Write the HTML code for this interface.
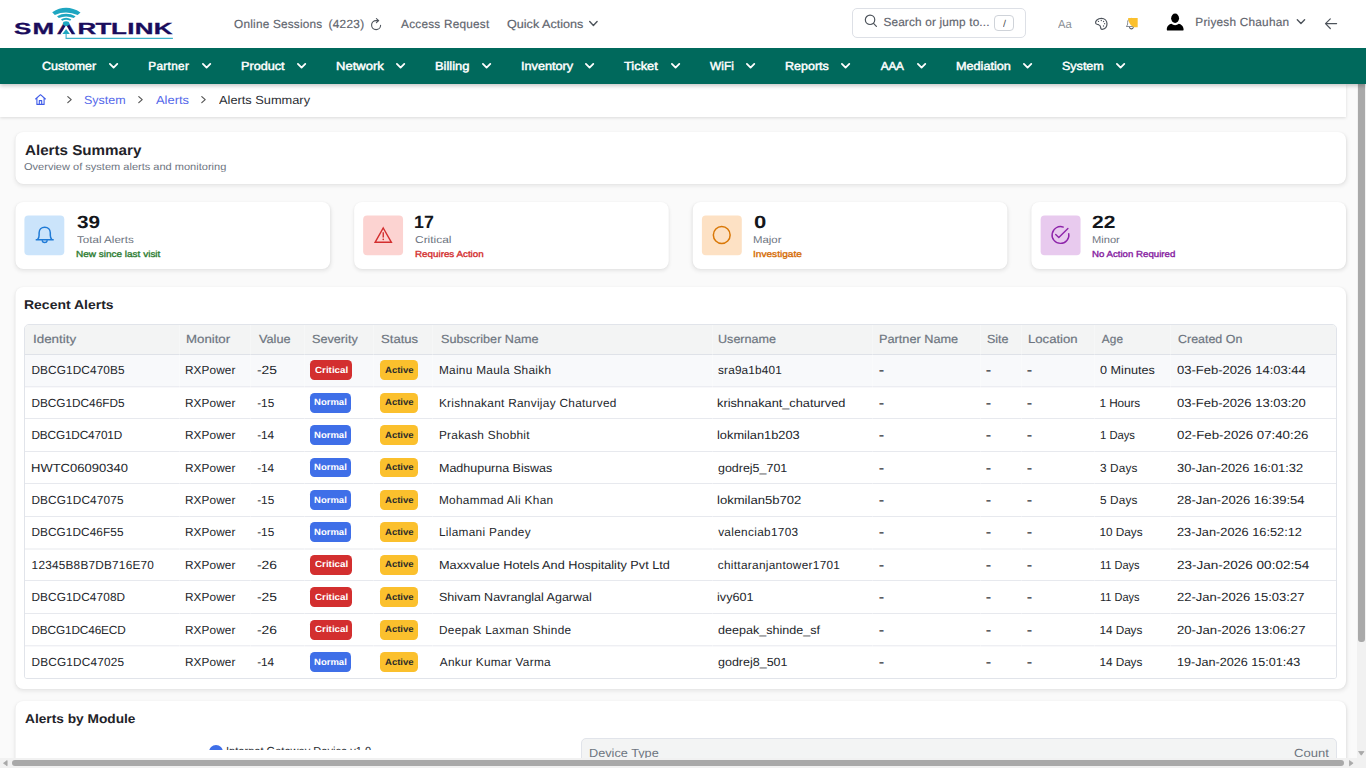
<!DOCTYPE html>
<html lang="en"><head><meta charset="utf-8"><title>Alerts Summary - Smartlink</title>
<style>
*{box-sizing:border-box;margin:0;padding:0}
html,body{width:1366px;height:768px;overflow:hidden;background:#fafafa}
body{font-family:"Liberation Sans",sans-serif;font-size:13px;color:#1f2329;position:relative;text-rendering:geometricPrecision}
.hx{-webkit-text-stroke:0.18px #5f656e}
.t{position:absolute;white-space:nowrap;line-height:1;display:block;transform-origin:0 50%}
a.t{text-decoration:none}
svg{position:absolute;overflow:visible}
#top{position:absolute;left:0;top:0;width:1366px;height:48px;background:#fff;z-index:6}
#nav{position:absolute;left:0;top:48px;width:1366px;height:36px;background:#00695c;z-index:5;box-shadow:0 2px 4px rgba(0,0,0,.22)}
#main{position:absolute;left:0;top:84px;width:1357px;height:674px;overflow:hidden;background:#fafafa}
#crumb{position:absolute;left:0;top:0;width:1346px;height:33px;background:#fff;box-shadow:0 1px 3px rgba(0,0,0,.13)}
.card{position:absolute}
.card::before{content:"";position:absolute;left:0;top:0;right:0;bottom:0;background:#fff;border-radius:8px;box-shadow:0 2px 4px rgba(0,0,0,.085),0 0 2px rgba(0,0,0,.035);transform-origin:0 0;transform:translateX(var(--dx,0px)) scaleX(var(--sx,1))}
.ib{position:absolute;width:40px;height:40px;border-radius:4px}
.search{position:absolute;left:852px;top:8px;width:174px;height:30px;border:1px solid #dde0e6;border-radius:5px;background:#fff}
.kbd{position:absolute;left:994px;top:15px;width:20px;height:16px;border:1px solid #cfd3d9;border-radius:4px;background:#fff}
.tbl{position:absolute;border:1px solid #e1e4ea;border-radius:5px 5px 3px 3px;overflow:hidden;background:#fff}
.th{position:absolute;left:0;top:0;right:0;background:#f3f4f4;border-bottom:1px solid #dfe2e8}
.tr{position:absolute;left:0;right:0;background:#fff}
.dv{position:absolute;left:0;right:0;height:1px;background:#e7e9ee;display:block}
.cv{position:absolute;top:0;bottom:0;width:1px;background:rgba(255,255,255,.3);display:block}
.tr.h{background:#f8f9fb}
.bd{position:absolute;border-radius:4.5px}
.vs{position:absolute;left:1357px;top:84px;width:9px;height:684px;background:#f1f1f1;z-index:3}
.hs{position:absolute;left:0;top:758px;width:1357px;height:10px;background:#f1f1f1;z-index:3}
.thumb{position:absolute;background:#a9a9a9;border-radius:3px}
</style></head>
<body>
<header id="top">
<svg style="left:0;top:0" width="200" height="48" viewBox="0 0 200 48">
<text transform="scale(1.62,1.0)" x="8.58 20.04 35.08 47.83 58.98 68.48 78.61 83.23 94.95" y="34.05" font-family="Liberation Sans, sans-serif" font-weight="700" font-size="16.0" fill="#1a0c5c" stroke="#1a0c5c" stroke-width="0.3" stroke-linejoin="miter" text-rendering="geometricPrecision">SMARTLINK</text>
<path d="M66.1 25.5 L60.2 34.6 H72 Z" fill="#fff"/>
<path d="M66.1 29.0 L62.4 34.1 H69.8 Z" fill="#1ea6c1"/>
<path d="M66.1 33.5 V38.4 H172.9" fill="none" stroke="#3fb2cb" stroke-width="1.1"/>
<ellipse cx="66.1" cy="23.6" rx="3.2" ry="2.3" fill="#1ea6c1"/>
<path d="M52.2 12.2 Q66.1 3.3 80.5 12.4 L77.7 15.0 Q66.1 10.0 54.8 14.9 Z" fill="#1ea6c1"/>
<path d="M57.0 16.2 Q66.1 11.4 75.6 16.3 L73.8 18.1 Q66.1 14.9 58.8 18.0 Z" fill="#1ea6c1"/>
<path d="M61.0 19.3 Q66.1 16.2 71.3 19.3 L70.2 20.7 Q66.1 18.8 62.1 20.7 Z" fill="#1ea6c1"/>
</svg>
<span class="t hx" style="left:234.10px;top:19.10px;font-size:11.8px;letter-spacing:0.207px;color:#5f656e;">Online Sessions</span>
<span class="t hx" style="left:328.40px;top:19.10px;font-size:11.8px;letter-spacing:0.341px;color:#5f656e;">(4223)</span>
<svg style="left:0;top:0" width="1366" height="48" viewBox="0 0 1366 48"><path d="M380.6 25.2 A4.5 4.5 0 1 1 376.1 20.6 H378.6 M376.4 18.6 L378.7 20.6 L376.4 22.7" fill="none" stroke="#4d535b" stroke-width="1.1" stroke-linecap="round" stroke-linejoin="round"/></svg>
<span class="t hx" style="left:401.05px;top:19.10px;font-size:11.8px;letter-spacing:0.227px;color:#5f656e;">Access Request</span>
<span class="t hx" style="left:507.46px;top:19.10px;font-size:11.8px;transform:scaleX(1.0679);color:#5f656e;">Quick Actions</span>
<svg style="left:0;top:0" width="1366" height="48" viewBox="0 0 1366 48"><path d="M589.7 21.6 L593.4 25.4 L597.1 21.6" fill="none" stroke="#4d535b" stroke-width="1.4" stroke-linecap="round" stroke-linejoin="round"/></svg>
<div class="search">
<svg style="left:0;top:0" width="172" height="28" viewBox="853 9 172 28"><circle cx="870.05" cy="19.8" r="4.7" fill="none" stroke="#4d535b" stroke-width="1.2"/><path d="M873.5 23.4 L876.4 26.4" stroke="#4d535b" stroke-width="1.2" stroke-linecap="round"/></svg>
<span class="t hx" style="left:30.38px;top:8.20px;font-size:11.8px;letter-spacing:0.169px;color:#5f656e;">Search or jump to...</span>
</div>
<div class="kbd"><span class="t" style="left:7.55px;top:3.60px;font-size:10px;transform:scaleX(1.0844);color:#555;">/</span></div>
<span class="t" style="left:1057.65px;top:19.10px;font-size:11.8px;transform:scaleX(0.9478);color:#8a8f96;">Aa</span>
<svg style="left:0;top:0" width="1366" height="48" viewBox="0 0 1366 48"><path d="M1101.4 18.4 C1097.6 18.4 1095.2 20.9 1095.6 23.2 C1095.9 24.4 1097.2 24.3 1098.6 24.7 C1100.2 25.2 1100.6 26.3 1100.7 27.6 C1100.8 28.7 1101.2 29.4 1102.2 29.3 C1104.9 28.9 1107.0 26.6 1107.0 23.7 C1107.0 20.7 1104.6 18.4 1101.4 18.4 Z" fill="none" stroke="#4d535b" stroke-width="1.2" stroke-linejoin="round"/><g fill="#4d535b"><circle cx="1098.5" cy="21.4" r=".65"/><circle cx="1101.3" cy="20.5" r=".65"/><circle cx="1103.6" cy="21.5" r=".65"/><circle cx="1104.6" cy="23.7" r=".65"/><circle cx="1103.5" cy="26.0" r=".65"/></g></svg>
<svg style="left:0;top:0" width="1366" height="48" viewBox="0 0 1366 48"><path d="M1126.2 26.5 C1127.6 25.6 1127.6 24.6 1127.6 22.6 C1127.6 20.2 1129.0 18.4 1131.4 18.4 C1133.8 18.4 1135.2 20.2 1135.2 22.6 C1135.2 24.6 1135.2 25.6 1136.6 26.5 Z" fill="none" stroke="#868c94" stroke-width="1.0" stroke-linejoin="round"/><path d="M1129.6 27.6 A1.9 1.9 0 0 0 1133.2 27.6" fill="none" stroke="#4d535b" stroke-width="1.1" stroke-linecap="round"/><path d="M1128.1 18.0 H1137.7 V27.3 H1134.4 C1130.8 26.2 1128.6 23.0 1128.1 18.0 Z" fill="#fbc02d"/></svg>
<svg style="left:0;top:0" width="1366" height="48" viewBox="0 0 1366 48"><ellipse cx="1175.1" cy="18.2" rx="3.95" ry="4.7" fill="#000"/><path d="M1166.8 29.4 C1166.8 26.4 1169.2 24.2 1171.4 23.8 C1172.4 24.7 1173.7 25.2 1175.1 25.2 C1176.5 25.2 1177.8 24.7 1178.8 23.8 C1181.0 24.2 1183.6 26.4 1183.6 29.4 C1183.6 30.2 1183.1 30.6 1182.4 30.6 H1168.0 C1167.3 30.6 1166.8 30.2 1166.8 29.4 Z" fill="#000"/></svg>
<span class="t hx" style="left:1195.33px;top:17.00px;font-size:11.8px;letter-spacing:0.229px;color:#5f656e;">Priyesh Chauhan</span>
<svg style="left:0;top:0" width="1366" height="48" viewBox="0 0 1366 48"><path d="M1297.3 19.8 L1300.95 23.4 L1304.6 19.8" fill="none" stroke="#4d535b" stroke-width="1.4" stroke-linecap="round" stroke-linejoin="round"/></svg>
<svg style="left:0;top:0" width="1366" height="48" viewBox="0 0 1366 48"><path d="M1336.6 23.6 H1325.6 M1330.3 18.8 L1325.5 23.6 L1330.3 28.5" fill="none" stroke="#4d535b" stroke-width="1.2" stroke-linecap="round" stroke-linejoin="round"/></svg>
</header>
<nav id="nav">
<a class="t" style="left:41.56px;top:13.20px;font-size:11.8px;transform:scaleX(1.0596);color:#fff;-webkit-text-stroke:0.45px #fff;">Customer</a>
<svg style="left:108.6px;top:15.2px" width="9.2" height="6" viewBox="0 0 9.2 6"><path d="M0.9 0.9 L4.6 4.6 L8.3 0.9" fill="none" stroke="#fff" stroke-width="1.8" stroke-linecap="round" stroke-linejoin="round"/></svg>
<a class="t" style="left:148.23px;top:13.20px;font-size:11.8px;letter-spacing:0.339px;color:#fff;-webkit-text-stroke:0.45px #fff;">Partner</a>
<svg style="left:201.8px;top:15.2px" width="9.2" height="6" viewBox="0 0 9.2 6"><path d="M0.9 0.9 L4.6 4.6 L8.3 0.9" fill="none" stroke="#fff" stroke-width="1.8" stroke-linecap="round" stroke-linejoin="round"/></svg>
<a class="t" style="left:240.56px;top:13.20px;font-size:11.8px;transform:scaleX(1.0720);color:#fff;-webkit-text-stroke:0.45px #fff;">Product</a>
<svg style="left:296.7px;top:15.2px" width="9.2" height="6" viewBox="0 0 9.2 6"><path d="M0.9 0.9 L4.6 4.6 L8.3 0.9" fill="none" stroke="#fff" stroke-width="1.8" stroke-linecap="round" stroke-linejoin="round"/></svg>
<a class="t" style="left:335.53px;top:13.20px;font-size:11.8px;transform:scaleX(1.1037);color:#fff;-webkit-text-stroke:0.45px #fff;">Network</a>
<svg style="left:396.2px;top:15.2px" width="9.2" height="6" viewBox="0 0 9.2 6"><path d="M0.9 0.9 L4.6 4.6 L8.3 0.9" fill="none" stroke="#fff" stroke-width="1.8" stroke-linecap="round" stroke-linejoin="round"/></svg>
<a class="t" style="left:435.14px;top:13.20px;font-size:11.8px;transform:scaleX(1.0954);color:#fff;-webkit-text-stroke:0.45px #fff;">Billing</a>
<svg style="left:481.7px;top:15.2px" width="9.2" height="6" viewBox="0 0 9.2 6"><path d="M0.9 0.9 L4.6 4.6 L8.3 0.9" fill="none" stroke="#fff" stroke-width="1.8" stroke-linecap="round" stroke-linejoin="round"/></svg>
<a class="t" style="left:520.56px;top:13.20px;font-size:11.8px;transform:scaleX(1.0742);color:#fff;-webkit-text-stroke:0.45px #fff;">Inventory</a>
<svg style="left:585.0px;top:15.2px" width="9.2" height="6" viewBox="0 0 9.2 6"><path d="M0.9 0.9 L4.6 4.6 L8.3 0.9" fill="none" stroke="#fff" stroke-width="1.8" stroke-linecap="round" stroke-linejoin="round"/></svg>
<a class="t" style="left:624.15px;top:13.20px;font-size:11.8px;transform:scaleX(1.0894);color:#fff;-webkit-text-stroke:0.45px #fff;">Ticket</a>
<svg style="left:670.5px;top:15.2px" width="9.2" height="6" viewBox="0 0 9.2 6"><path d="M0.9 0.9 L4.6 4.6 L8.3 0.9" fill="none" stroke="#fff" stroke-width="1.8" stroke-linecap="round" stroke-linejoin="round"/></svg>
<a class="t" style="left:709.95px;top:13.20px;font-size:11.8px;letter-spacing:0.146px;color:#fff;-webkit-text-stroke:0.45px #fff;">WiFi</a>
<svg style="left:745.9px;top:15.2px" width="9.2" height="6" viewBox="0 0 9.2 6"><path d="M0.9 0.9 L4.6 4.6 L8.3 0.9" fill="none" stroke="#fff" stroke-width="1.8" stroke-linecap="round" stroke-linejoin="round"/></svg>
<a class="t" style="left:785.17px;top:13.20px;font-size:11.8px;transform:scaleX(1.0605);color:#fff;-webkit-text-stroke:0.45px #fff;">Reports</a>
<svg style="left:841.0px;top:15.2px" width="9.2" height="6" viewBox="0 0 9.2 6"><path d="M0.9 0.9 L4.6 4.6 L8.3 0.9" fill="none" stroke="#fff" stroke-width="1.8" stroke-linecap="round" stroke-linejoin="round"/></svg>
<a class="t" style="left:880.75px;top:13.20px;font-size:11.8px;letter-spacing:-0.210px;color:#fff;-webkit-text-stroke:0.45px #fff;">AAA</a>
<svg style="left:916.5px;top:15.2px" width="9.2" height="6" viewBox="0 0 9.2 6"><path d="M0.9 0.9 L4.6 4.6 L8.3 0.9" fill="none" stroke="#fff" stroke-width="1.8" stroke-linecap="round" stroke-linejoin="round"/></svg>
<a class="t" style="left:956.16px;top:13.20px;font-size:11.8px;transform:scaleX(1.0720);color:#fff;-webkit-text-stroke:0.45px #fff;">Mediation</a>
<svg style="left:1022.8px;top:15.2px" width="9.2" height="6" viewBox="0 0 9.2 6"><path d="M0.9 0.9 L4.6 4.6 L8.3 0.9" fill="none" stroke="#fff" stroke-width="1.8" stroke-linecap="round" stroke-linejoin="round"/></svg>
<a class="t" style="left:1062.06px;top:13.20px;font-size:11.8px;transform:scaleX(1.0623);color:#fff;-webkit-text-stroke:0.45px #fff;">System</a>
<svg style="left:1115.6px;top:15.2px" width="9.2" height="6" viewBox="0 0 9.2 6"><path d="M0.9 0.9 L4.6 4.6 L8.3 0.9" fill="none" stroke="#fff" stroke-width="1.8" stroke-linecap="round" stroke-linejoin="round"/></svg>
</nav>
<main id="main">
<div id="crumb">
<svg style="left:35px;top:10px" width="11" height="11" viewBox="0 0 11 11"><path d="M0.6 5 L5.5 0.7 L10.4 5 M1.9 4.2 V10.4 H9.1 V4.2 M4.3 10.4 V6.6 H6.7 V10.4" fill="none" stroke="#3f5be8" stroke-width="1.1" stroke-linejoin="round" stroke-linecap="round"/></svg>
<svg style="left:66.6px;top:11.8px" width="5.2" height="7.2" viewBox="0 0 5.2 7.2"><path d="M0.8 0.6 L4.2 3.6 L0.8 6.6" fill="none" stroke="#555" stroke-width="1.2" stroke-linecap="round" stroke-linejoin="round"/></svg>
<svg style="left:137.9px;top:11.8px" width="5.2" height="7.2" viewBox="0 0 5.2 7.2"><path d="M0.8 0.6 L4.2 3.6 L0.8 6.6" fill="none" stroke="#555" stroke-width="1.2" stroke-linecap="round" stroke-linejoin="round"/></svg>
<svg style="left:201.2px;top:11.8px" width="5.2" height="7.2" viewBox="0 0 5.2 7.2"><path d="M0.8 0.6 L4.2 3.6 L0.8 6.6" fill="none" stroke="#555" stroke-width="1.2" stroke-linecap="round" stroke-linejoin="round"/></svg>
<a class="t" style="left:84.06px;top:11.10px;font-size:11.8px;transform:scaleX(1.0597);color:#5468ea;">System</a>
<a class="t" style="left:155.85px;top:11.10px;font-size:11.8px;transform:scaleX(1.0959);color:#5468ea;">Alerts</a>
<span class="t" style="left:219.15px;top:11.10px;font-size:11.8px;transform:scaleX(1.0849);color:#2a2d33;">Alerts Summary</span>
</div>
<section class="card" style="left:16px;top:48px;width:1330px;height:52px;--dx:-0.50px;--sx:1.00038;">
<h1 class="t" style="left:8.81px;top:11.90px;font-size:14.3px;transform:scaleX(1.0612);font-weight:700;color:#1f2329;">Alerts Summary</h1>
<p class="t" style="left:8.43px;top:31.10px;font-size:10px;transform:scaleX(1.1030);color:#6d7480;">Overview of system alerts and monitoring</p>
</section>
<section class="card" style="left:16px;top:118px;width:314px;height:67px;--dx:-0.50px;--sx:1.00199;">
<svg style="left:0;top:0" width="314" height="67" viewBox="16 202 314 67"><rect x="24.40" y="215.4" width="39.9" height="39.9" rx="4" fill="#cbe4fb"/><path d="M35.7 239.8 H53.7 M37.6 239.6 C38.7 238.4 39.1 237 39.1 235.2 V232.8 C39.1 229.6 41.4 227.3 44.7 227.3 C48 227.3 50.3 229.6 50.3 232.8 V235.2 C50.3 237 50.7 238.4 51.8 239.6 M42.1 240.6 A2.7 2.7 0 0 0 47.3 240.6" fill="none" stroke="#1f7ad6" stroke-width="1.5" stroke-linejoin="round"/></svg>
<span class="t" style="left:60.63px;top:12.00px;font-size:17.7px;transform:scaleX(1.1729);font-weight:700;color:#14171c;">39</span>
<span class="t" style="left:60.77px;top:34.00px;font-size:10px;transform:scaleX(1.1603);color:#6d7480;">Total Alerts</span>
<span class="t" style="left:60.17px;top:48.00px;font-size:8.8px;transform:scaleX(1.1354);color:#2e7d32;-webkit-text-stroke:0.35px #2e7d32;">New since last visit</span>
</section>
<section class="card" style="left:354px;top:118px;width:315px;height:67px;--dx:0.12px;--sx:0.99881;">
<svg style="left:0;top:0" width="315" height="67" viewBox="354 202 315 67"><rect x="363.15" y="215.4" width="39.9" height="39.9" rx="4" fill="#fcd3d1"/><path d="M383.25 228.0 L391.4 242.3 H375.1 Z" fill="none" stroke="#d32f2f" stroke-width="1.4" stroke-linejoin="miter"/><path d="M383.25 232.2 V237.4" stroke="#d32f2f" stroke-width="1.4"/><circle cx="383.25" cy="239.4" r="0.8" fill="#d32f2f"/></svg>
<span class="t" style="left:60.34px;top:12.00px;font-size:17.7px;transform:scaleX(1.0048);font-weight:700;color:#14171c;">17</span>
<span class="t" style="left:60.89px;top:34.00px;font-size:10px;transform:scaleX(1.1944);color:#6d7480;">Critical</span>
<span class="t" style="left:60.68px;top:48.00px;font-size:8.8px;transform:scaleX(1.1151);color:#d32f2f;-webkit-text-stroke:0.35px #d32f2f;">Requires Action</span>
</section>
<section class="card" style="left:693px;top:118px;width:314px;height:67px;--dx:-0.25px;--sx:1.00199;">
<svg style="left:0;top:0" width="314" height="67" viewBox="693 202 314 67"><rect x="701.90" y="215.4" width="39.9" height="39.9" rx="4" fill="#fde1c4"/><circle cx="721.75" cy="235.0" r="8.4" fill="none" stroke="#d97706" stroke-width="1.5"/></svg>
<span class="t" style="left:60.56px;top:12.00px;font-size:17.7px;transform:scaleX(1.2500);font-weight:700;color:#14171c;">0</span>
<span class="t" style="left:60.36px;top:34.00px;font-size:10px;transform:scaleX(1.1396);color:#6d7480;">Major</span>
<span class="t" style="left:60.46px;top:48.00px;font-size:8.8px;transform:scaleX(1.1501);color:#d56c06;-webkit-text-stroke:0.35px #d56c06;">Investigate</span>
</section>
<section class="card" style="left:1031px;top:118px;width:315px;height:67px;--dx:0.38px;--sx:0.99881;">
<svg style="left:0;top:0" width="315" height="67" viewBox="1031 202 315 67"><rect x="1040.65" y="215.4" width="39.9" height="39.9" rx="4" fill="#e8caee"/><path d="M1068.75 233.6 A8.4 8.4 0 1 1 1063.3 227.1" fill="none" stroke="#8e24aa" stroke-width="1.4" stroke-linecap="round"/><path d="M1055.7 234.6 L1058.8 237.6 L1067.9 228.5" fill="none" stroke="#8e24aa" stroke-width="1.4" stroke-linecap="round" stroke-linejoin="round"/></svg>
<span class="t" style="left:61.29px;top:12.00px;font-size:17.7px;transform:scaleX(1.1902);font-weight:700;color:#14171c;">22</span>
<span class="t" style="left:61.08px;top:34.00px;font-size:10px;transform:scaleX(1.1107);color:#6d7480;">Minor</span>
<span class="t" style="left:61.19px;top:48.00px;font-size:8.8px;transform:scaleX(1.0988);color:#86209f;-webkit-text-stroke:0.35px #86209f;">No Action Required</span>
</section>
<section class="card" style="left:16px;top:203px;width:1330px;height:402px;--dx:-0.50px;--sx:1.00038;">
<h2 class="t" style="left:8.18px;top:11.90px;font-size:12.7px;transform:scaleX(1.1016);font-weight:700;color:#1f2329;">Recent Alerts</h2>
<div class="tbl" style="left:8px;top:37px;width:1313px;height:355px">
<div class="th" style="height:30px">
<span class="t" style="left:7.60px;top:9.20px;font-size:11.8px;transform:scaleX(1.1354);color:#6d7480;-webkit-text-stroke:0.2px #6d7480;">Identity</span>
<span class="t" style="left:160.92px;top:9.20px;font-size:11.8px;transform:scaleX(1.1220);color:#6d7480;-webkit-text-stroke:0.2px #6d7480;">Monitor</span>
<span class="t" style="left:233.85px;top:9.20px;font-size:11.8px;transform:scaleX(1.0772);color:#6d7480;-webkit-text-stroke:0.2px #6d7480;">Value</span>
<span class="t" style="left:286.75px;top:9.20px;font-size:11.8px;transform:scaleX(1.0732);color:#6d7480;-webkit-text-stroke:0.2px #6d7480;">Severity</span>
<span class="t" style="left:356.24px;top:9.20px;font-size:11.8px;transform:scaleX(1.1111);color:#6d7480;-webkit-text-stroke:0.2px #6d7480;">Status</span>
<span class="t" style="left:415.56px;top:9.20px;font-size:11.8px;transform:scaleX(1.0702);color:#6d7480;-webkit-text-stroke:0.2px #6d7480;">Subscriber Name</span>
<span class="t" style="left:693.46px;top:9.20px;font-size:11.8px;transform:scaleX(1.0664);color:#6d7480;-webkit-text-stroke:0.2px #6d7480;">Username</span>
<span class="t" style="left:854.36px;top:9.20px;font-size:11.8px;transform:scaleX(1.0777);color:#6d7480;-webkit-text-stroke:0.2px #6d7480;">Partner Name</span>
<span class="t" style="left:961.96px;top:9.20px;font-size:11.8px;transform:scaleX(1.0597);color:#6d7480;-webkit-text-stroke:0.2px #6d7480;">Site</span>
<span class="t" style="left:1002.72px;top:9.20px;font-size:11.8px;transform:scaleX(1.1121);color:#6d7480;-webkit-text-stroke:0.2px #6d7480;">Location</span>
<span class="t" style="left:1076.75px;top:9.20px;font-size:11.8px;letter-spacing:0.216px;color:#6d7480;-webkit-text-stroke:0.2px #6d7480;">Age</span>
<span class="t" style="left:1152.67px;top:9.20px;font-size:11.8px;transform:scaleX(1.0546);color:#6d7480;-webkit-text-stroke:0.2px #6d7480;">Created On</span>
</div>
<div class="tr h" style="top:30px;height:32px">
<span class="t" style="left:6.43px;top:10.20px;font-size:11.8px;letter-spacing:0.121px;color:#23262b;">DBCG1DC470B5</span>
<span class="t" style="left:160.03px;top:10.20px;font-size:11.8px;letter-spacing:0.082px;color:#23262b;">RXPower</span>
<span class="t" style="left:232.12px;top:10.20px;font-size:11.8px;transform:scaleX(1.1754);color:#23262b;">-25</span>
<span class="bd" style="left:285px;top:5px;width:42px;height:20px;background:#d32f2f"><span class="t" style="left:4.64px;top:5.85px;font-size:9px;transform:scaleX(1.0893);font-weight:700;color:#fff;">Critical</span></span>
<span class="bd" style="left:355px;top:5px;width:38.4px;height:20px;background:#fbc02d"><span class="t" style="left:5.20px;top:5.85px;font-size:9px;transform:scaleX(1.0601);font-weight:700;color:#2a2a2a;">Active</span></span>
<span class="t" style="left:413.93px;top:10.20px;font-size:11.8px;letter-spacing:0.307px;color:#23262b;">Mainu Maula Shaikh</span>
<span class="t" style="left:692.97px;top:10.20px;font-size:11.8px;letter-spacing:0.176px;color:#23262b;">sra9a1b401</span>
<span class="t" style="left:853.59px;top:10.20px;font-size:11.8px;transform:scaleX(1.2500);color:#23262b;-webkit-text-stroke:0.3px #23262b;">-</span>
<span class="t" style="left:960.59px;top:10.20px;font-size:11.8px;transform:scaleX(1.2500);color:#23262b;-webkit-text-stroke:0.3px #23262b;">-</span>
<span class="t" style="left:1002.19px;top:10.20px;font-size:11.8px;transform:scaleX(1.2500);color:#23262b;-webkit-text-stroke:0.3px #23262b;">-</span>
<span class="t" style="left:1074.85px;top:10.20px;font-size:11.8px;transform:scaleX(1.0720);color:#23262b;">0 Minutes</span>
<span class="t" style="left:1151.94px;top:10.20px;font-size:11.8px;transform:scaleX(1.1036);color:#23262b;">03-Feb-2026 14:03:44</span>
</div>
<div class="tr" style="top:62px;height:32px">
<span class="t" style="left:6.43px;top:10.64px;font-size:11.8px;color:#23262b;">DBCG1DC46FD5</span>
<span class="t" style="left:160.03px;top:10.64px;font-size:11.8px;letter-spacing:0.082px;color:#23262b;">RXPower</span>
<span class="t" style="left:232.18px;top:10.64px;font-size:11.8px;letter-spacing:0.021px;color:#23262b;">-15</span>
<span class="bd" style="left:285px;top:6px;width:41px;height:20px;background:#3f6fe8"><span class="t" style="left:4.35px;top:5.29px;font-size:9px;transform:scaleX(1.0580);font-weight:700;color:#fff;">Normal</span></span>
<span class="bd" style="left:355px;top:6px;width:38.4px;height:20px;background:#fbc02d"><span class="t" style="left:5.20px;top:5.29px;font-size:9px;transform:scaleX(1.0601);font-weight:700;color:#2a2a2a;">Active</span></span>
<span class="t" style="left:413.93px;top:10.64px;font-size:11.8px;letter-spacing:0.306px;color:#23262b;">Krishnakant Ranvijay Chaturved</span>
<span class="t" style="left:692.35px;top:10.64px;font-size:11.8px;transform:scaleX(1.0820);color:#23262b;">krishnakant_chaturved</span>
<span class="t" style="left:853.59px;top:10.64px;font-size:11.8px;transform:scaleX(1.2500);color:#23262b;-webkit-text-stroke:0.3px #23262b;">-</span>
<span class="t" style="left:960.59px;top:10.64px;font-size:11.8px;transform:scaleX(1.2500);color:#23262b;-webkit-text-stroke:0.3px #23262b;">-</span>
<span class="t" style="left:1002.19px;top:10.64px;font-size:11.8px;transform:scaleX(1.2500);color:#23262b;-webkit-text-stroke:0.3px #23262b;">-</span>
<span class="t" style="left:1074.51px;top:10.64px;font-size:11.8px;letter-spacing:-0.094px;color:#23262b;">1 Hours</span>
<span class="t" style="left:1151.94px;top:10.64px;font-size:11.8px;transform:scaleX(1.1036);color:#23262b;">03-Feb-2026 13:03:20</span>
</div>
<div class="tr" style="top:94px;height:33px">
<span class="t" style="left:6.43px;top:11.08px;font-size:11.8px;letter-spacing:-0.144px;color:#23262b;">DBCG1DC4701D</span>
<span class="t" style="left:160.03px;top:11.08px;font-size:11.8px;letter-spacing:0.082px;color:#23262b;">RXPower</span>
<span class="t" style="left:232.18px;top:11.08px;font-size:11.8px;letter-spacing:-0.071px;color:#23262b;">-14</span>
<span class="bd" style="left:285px;top:6px;width:41px;height:20px;background:#3f6fe8"><span class="t" style="left:4.35px;top:5.73px;font-size:9px;transform:scaleX(1.0580);font-weight:700;color:#fff;">Normal</span></span>
<span class="bd" style="left:355px;top:6px;width:38.4px;height:20px;background:#fbc02d"><span class="t" style="left:5.20px;top:5.73px;font-size:9px;transform:scaleX(1.0601);font-weight:700;color:#2a2a2a;">Active</span></span>
<span class="t" style="left:413.93px;top:11.08px;font-size:11.8px;letter-spacing:0.289px;color:#23262b;">Prakash Shobhit</span>
<span class="t" style="left:692.35px;top:11.08px;font-size:11.8px;transform:scaleX(1.0864);color:#23262b;">lokmilan1b203</span>
<span class="t" style="left:853.59px;top:11.08px;font-size:11.8px;transform:scaleX(1.2500);color:#23262b;-webkit-text-stroke:0.3px #23262b;">-</span>
<span class="t" style="left:960.59px;top:11.08px;font-size:11.8px;transform:scaleX(1.2500);color:#23262b;-webkit-text-stroke:0.3px #23262b;">-</span>
<span class="t" style="left:1002.19px;top:11.08px;font-size:11.8px;transform:scaleX(1.2500);color:#23262b;-webkit-text-stroke:0.3px #23262b;">-</span>
<span class="t" style="left:1074.55px;top:11.08px;font-size:11.8px;transform:scaleX(0.9531);color:#23262b;">1 Days</span>
<span class="t" style="left:1151.93px;top:11.08px;font-size:11.8px;transform:scaleX(1.1261);color:#23262b;">02-Feb-2026 07:40:26</span>
</div>
<div class="tr" style="top:127px;height:32px">
<span class="t" style="left:6.33px;top:10.52px;font-size:11.8px;transform:scaleX(1.1024);color:#23262b;">HWTC06090340</span>
<span class="t" style="left:160.03px;top:10.52px;font-size:11.8px;letter-spacing:0.082px;color:#23262b;">RXPower</span>
<span class="t" style="left:232.18px;top:10.52px;font-size:11.8px;letter-spacing:-0.071px;color:#23262b;">-14</span>
<span class="bd" style="left:285px;top:6px;width:41px;height:19px;background:#3f6fe8"><span class="t" style="left:4.35px;top:5.17px;font-size:9px;transform:scaleX(1.0580);font-weight:700;color:#fff;">Normal</span></span>
<span class="bd" style="left:355px;top:6px;width:38.4px;height:19px;background:#fbc02d"><span class="t" style="left:5.20px;top:5.17px;font-size:9px;transform:scaleX(1.0601);font-weight:700;color:#2a2a2a;">Active</span></span>
<span class="t" style="left:413.87px;top:10.52px;font-size:11.8px;transform:scaleX(1.0589);color:#23262b;">Madhupurna Biswas</span>
<span class="t" style="left:692.76px;top:10.52px;font-size:11.8px;transform:scaleX(1.0553);color:#23262b;">godrej5_701</span>
<span class="t" style="left:853.59px;top:10.52px;font-size:11.8px;transform:scaleX(1.2500);color:#23262b;-webkit-text-stroke:0.3px #23262b;">-</span>
<span class="t" style="left:960.59px;top:10.52px;font-size:11.8px;transform:scaleX(1.2500);color:#23262b;-webkit-text-stroke:0.3px #23262b;">-</span>
<span class="t" style="left:1002.19px;top:10.52px;font-size:11.8px;transform:scaleX(1.2500);color:#23262b;-webkit-text-stroke:0.3px #23262b;">-</span>
<span class="t" style="left:1074.88px;top:10.52px;font-size:11.8px;letter-spacing:0.152px;color:#23262b;">3 Days</span>
<span class="t" style="left:1151.95px;top:10.52px;font-size:11.8px;transform:scaleX(1.0927);color:#23262b;">30-Jan-2026 16:01:32</span>
</div>
<div class="tr" style="top:159px;height:33px">
<span class="t" style="left:6.43px;top:10.96px;font-size:11.8px;letter-spacing:0.140px;color:#23262b;">DBCG1DC47075</span>
<span class="t" style="left:160.03px;top:10.96px;font-size:11.8px;letter-spacing:0.082px;color:#23262b;">RXPower</span>
<span class="t" style="left:232.18px;top:10.96px;font-size:11.8px;letter-spacing:0.021px;color:#23262b;">-15</span>
<span class="bd" style="left:285px;top:6px;width:41px;height:20px;background:#3f6fe8"><span class="t" style="left:4.35px;top:5.61px;font-size:9px;transform:scaleX(1.0580);font-weight:700;color:#fff;">Normal</span></span>
<span class="bd" style="left:355px;top:6px;width:38.4px;height:20px;background:#fbc02d"><span class="t" style="left:5.20px;top:5.61px;font-size:9px;transform:scaleX(1.0601);font-weight:700;color:#2a2a2a;">Active</span></span>
<span class="t" style="left:413.93px;top:10.96px;font-size:11.8px;letter-spacing:0.332px;color:#23262b;">Mohammad Ali Khan</span>
<span class="t" style="left:692.33px;top:10.96px;font-size:11.8px;transform:scaleX(1.1091);color:#23262b;">lokmilan5b702</span>
<span class="t" style="left:853.59px;top:10.96px;font-size:11.8px;transform:scaleX(1.2500);color:#23262b;-webkit-text-stroke:0.3px #23262b;">-</span>
<span class="t" style="left:960.59px;top:10.96px;font-size:11.8px;transform:scaleX(1.2500);color:#23262b;-webkit-text-stroke:0.3px #23262b;">-</span>
<span class="t" style="left:1002.19px;top:10.96px;font-size:11.8px;transform:scaleX(1.2500);color:#23262b;-webkit-text-stroke:0.3px #23262b;">-</span>
<span class="t" style="left:1074.88px;top:10.96px;font-size:11.8px;letter-spacing:0.152px;color:#23262b;">5 Days</span>
<span class="t" style="left:1151.74px;top:10.96px;font-size:11.8px;transform:scaleX(1.1049);color:#23262b;">28-Jan-2026 16:39:54</span>
</div>
<div class="tr" style="top:192px;height:32px">
<span class="t" style="left:6.43px;top:10.40px;font-size:11.8px;letter-spacing:0.081px;color:#23262b;">DBCG1DC46F55</span>
<span class="t" style="left:160.03px;top:10.40px;font-size:11.8px;letter-spacing:0.082px;color:#23262b;">RXPower</span>
<span class="t" style="left:232.18px;top:10.40px;font-size:11.8px;letter-spacing:0.021px;color:#23262b;">-15</span>
<span class="bd" style="left:285px;top:5px;width:41px;height:20px;background:#3f6fe8"><span class="t" style="left:4.35px;top:6.05px;font-size:9px;transform:scaleX(1.0580);font-weight:700;color:#fff;">Normal</span></span>
<span class="bd" style="left:355px;top:5px;width:38.4px;height:20px;background:#fbc02d"><span class="t" style="left:5.20px;top:6.05px;font-size:9px;transform:scaleX(1.0601);font-weight:700;color:#2a2a2a;">Active</span></span>
<span class="t" style="left:413.93px;top:10.40px;font-size:11.8px;letter-spacing:0.316px;color:#23262b;">Lilamani Pandey</span>
<span class="t" style="left:693.15px;top:10.40px;font-size:11.8px;letter-spacing:0.327px;color:#23262b;">valenciab1703</span>
<span class="t" style="left:853.59px;top:10.40px;font-size:11.8px;transform:scaleX(1.2500);color:#23262b;-webkit-text-stroke:0.3px #23262b;">-</span>
<span class="t" style="left:960.59px;top:10.40px;font-size:11.8px;transform:scaleX(1.2500);color:#23262b;-webkit-text-stroke:0.3px #23262b;">-</span>
<span class="t" style="left:1002.19px;top:10.40px;font-size:11.8px;transform:scaleX(1.2500);color:#23262b;-webkit-text-stroke:0.3px #23262b;">-</span>
<span class="t" style="left:1074.51px;top:10.40px;font-size:11.8px;letter-spacing:-0.022px;color:#23262b;">10 Days</span>
<span class="t" style="left:1151.75px;top:10.40px;font-size:11.8px;transform:scaleX(1.0822);color:#23262b;">23-Jan-2026 16:52:12</span>
</div>
<div class="tr" style="top:224px;height:33px">
<span class="t" style="left:6.61px;top:10.84px;font-size:11.8px;letter-spacing:0.220px;color:#23262b;">12345B8B7DB716E70</span>
<span class="t" style="left:160.03px;top:10.84px;font-size:11.8px;letter-spacing:0.082px;color:#23262b;">RXPower</span>
<span class="t" style="left:232.12px;top:10.84px;font-size:11.8px;transform:scaleX(1.1754);color:#23262b;">-26</span>
<span class="bd" style="left:285px;top:6px;width:42px;height:20px;background:#d32f2f"><span class="t" style="left:4.64px;top:5.49px;font-size:9px;transform:scaleX(1.0893);font-weight:700;color:#fff;">Critical</span></span>
<span class="bd" style="left:355px;top:6px;width:38.4px;height:20px;background:#fbc02d"><span class="t" style="left:5.20px;top:5.49px;font-size:9px;transform:scaleX(1.0601);font-weight:700;color:#2a2a2a;">Active</span></span>
<span class="t" style="left:413.86px;top:10.84px;font-size:11.8px;transform:scaleX(1.0769);color:#23262b;">Maxxvalue Hotels And Hospitality Pvt Ltd</span>
<span class="t" style="left:692.78px;top:10.84px;font-size:11.8px;letter-spacing:0.304px;color:#23262b;">chittaranjantower1701</span>
<span class="t" style="left:853.59px;top:10.84px;font-size:11.8px;transform:scaleX(1.2500);color:#23262b;-webkit-text-stroke:0.3px #23262b;">-</span>
<span class="t" style="left:960.59px;top:10.84px;font-size:11.8px;transform:scaleX(1.2500);color:#23262b;-webkit-text-stroke:0.3px #23262b;">-</span>
<span class="t" style="left:1002.19px;top:10.84px;font-size:11.8px;transform:scaleX(1.2500);color:#23262b;-webkit-text-stroke:0.3px #23262b;">-</span>
<span class="t" style="left:1074.56px;top:10.84px;font-size:11.8px;transform:scaleX(0.9333);color:#23262b;">11 Days</span>
<span class="t" style="left:1151.72px;top:10.84px;font-size:11.8px;transform:scaleX(1.1451);color:#23262b;">23-Jan-2026 00:02:54</span>
</div>
<div class="tr" style="top:257px;height:32px">
<span class="t" style="left:6.43px;top:10.28px;font-size:11.8px;letter-spacing:0.110px;color:#23262b;">DBCG1DC4708D</span>
<span class="t" style="left:160.03px;top:10.28px;font-size:11.8px;letter-spacing:0.082px;color:#23262b;">RXPower</span>
<span class="t" style="left:232.12px;top:10.28px;font-size:11.8px;transform:scaleX(1.1754);color:#23262b;">-25</span>
<span class="bd" style="left:285px;top:5px;width:42px;height:20px;background:#d32f2f"><span class="t" style="left:4.64px;top:5.93px;font-size:9px;transform:scaleX(1.0893);font-weight:700;color:#fff;">Critical</span></span>
<span class="bd" style="left:355px;top:5px;width:38.4px;height:20px;background:#fbc02d"><span class="t" style="left:5.20px;top:5.93px;font-size:9px;transform:scaleX(1.0601);font-weight:700;color:#2a2a2a;">Active</span></span>
<span class="t" style="left:414.46px;top:10.28px;font-size:11.8px;transform:scaleX(1.0588);color:#23262b;">Shivam Navranglal Agarwal</span>
<span class="t" style="left:692.36px;top:10.28px;font-size:11.8px;transform:scaleX(1.0716);color:#23262b;">ivy601</span>
<span class="t" style="left:853.59px;top:10.28px;font-size:11.8px;transform:scaleX(1.2500);color:#23262b;-webkit-text-stroke:0.3px #23262b;">-</span>
<span class="t" style="left:960.59px;top:10.28px;font-size:11.8px;transform:scaleX(1.2500);color:#23262b;-webkit-text-stroke:0.3px #23262b;">-</span>
<span class="t" style="left:1002.19px;top:10.28px;font-size:11.8px;transform:scaleX(1.2500);color:#23262b;-webkit-text-stroke:0.3px #23262b;">-</span>
<span class="t" style="left:1074.56px;top:10.28px;font-size:11.8px;transform:scaleX(0.9333);color:#23262b;">11 Days</span>
<span class="t" style="left:1151.74px;top:10.28px;font-size:11.8px;transform:scaleX(1.1041);color:#23262b;">22-Jan-2026 15:03:27</span>
</div>
<div class="tr" style="top:289px;height:32px">
<span class="t" style="left:6.43px;top:10.72px;font-size:11.8px;letter-spacing:-0.123px;color:#23262b;">DBCG1DC46ECD</span>
<span class="t" style="left:160.03px;top:10.72px;font-size:11.8px;letter-spacing:0.082px;color:#23262b;">RXPower</span>
<span class="t" style="left:232.12px;top:10.72px;font-size:11.8px;transform:scaleX(1.1754);color:#23262b;">-26</span>
<span class="bd" style="left:285px;top:6px;width:42px;height:20px;background:#d32f2f"><span class="t" style="left:4.64px;top:5.37px;font-size:9px;transform:scaleX(1.0893);font-weight:700;color:#fff;">Critical</span></span>
<span class="bd" style="left:355px;top:6px;width:38.4px;height:20px;background:#fbc02d"><span class="t" style="left:5.20px;top:5.37px;font-size:9px;transform:scaleX(1.0601);font-weight:700;color:#2a2a2a;">Active</span></span>
<span class="t" style="left:413.93px;top:10.72px;font-size:11.8px;letter-spacing:0.332px;color:#23262b;">Deepak Laxman Shinde</span>
<span class="t" style="left:692.76px;top:10.72px;font-size:11.8px;transform:scaleX(1.0659);color:#23262b;">deepak_shinde_sf</span>
<span class="t" style="left:853.59px;top:10.72px;font-size:11.8px;transform:scaleX(1.2500);color:#23262b;-webkit-text-stroke:0.3px #23262b;">-</span>
<span class="t" style="left:960.59px;top:10.72px;font-size:11.8px;transform:scaleX(1.2500);color:#23262b;-webkit-text-stroke:0.3px #23262b;">-</span>
<span class="t" style="left:1002.19px;top:10.72px;font-size:11.8px;transform:scaleX(1.2500);color:#23262b;-webkit-text-stroke:0.3px #23262b;">-</span>
<span class="t" style="left:1074.51px;top:10.72px;font-size:11.8px;letter-spacing:-0.072px;color:#23262b;">14 Days</span>
<span class="t" style="left:1151.73px;top:10.72px;font-size:11.8px;transform:scaleX(1.1128);color:#23262b;">20-Jan-2026 13:06:27</span>
</div>
<div class="tr" style="top:321px;height:32px">
<span class="t" style="left:6.43px;top:11.16px;font-size:11.8px;letter-spacing:0.204px;color:#23262b;">DBCG1DC47025</span>
<span class="t" style="left:160.03px;top:11.16px;font-size:11.8px;letter-spacing:0.082px;color:#23262b;">RXPower</span>
<span class="t" style="left:232.18px;top:11.16px;font-size:11.8px;letter-spacing:-0.071px;color:#23262b;">-14</span>
<span class="bd" style="left:285px;top:6px;width:41px;height:20px;background:#3f6fe8"><span class="t" style="left:4.35px;top:5.81px;font-size:9px;transform:scaleX(1.0580);font-weight:700;color:#fff;">Normal</span></span>
<span class="bd" style="left:355px;top:6px;width:38.4px;height:20px;background:#fbc02d"><span class="t" style="left:5.20px;top:5.81px;font-size:9px;transform:scaleX(1.0601);font-weight:700;color:#2a2a2a;">Active</span></span>
<span class="t" style="left:414.85px;top:11.16px;font-size:11.8px;letter-spacing:0.297px;color:#23262b;">Ankur Kumar Varma</span>
<span class="t" style="left:692.76px;top:11.16px;font-size:11.8px;transform:scaleX(1.0599);color:#23262b;">godrej8_501</span>
<span class="t" style="left:853.59px;top:11.16px;font-size:11.8px;transform:scaleX(1.2500);color:#23262b;-webkit-text-stroke:0.3px #23262b;">-</span>
<span class="t" style="left:960.59px;top:11.16px;font-size:11.8px;transform:scaleX(1.2500);color:#23262b;-webkit-text-stroke:0.3px #23262b;">-</span>
<span class="t" style="left:1002.19px;top:11.16px;font-size:11.8px;transform:scaleX(1.2500);color:#23262b;-webkit-text-stroke:0.3px #23262b;">-</span>
<span class="t" style="left:1074.51px;top:11.16px;font-size:11.8px;letter-spacing:-0.072px;color:#23262b;">14 Days</span>
<span class="t" style="left:1151.56px;top:11.16px;font-size:11.8px;transform:scaleX(1.0682);color:#23262b;">19-Jan-2026 15:01:43</span>
</div>
<i class="dv" style="top:61px;transform:translateY(0.3px)"></i>
<i class="dv" style="top:93px"></i>
<i class="dv" style="top:126px"></i>
<i class="dv" style="top:158px"></i>
<i class="dv" style="top:191px"></i>
<i class="dv" style="top:223px;transform:translateY(0.5px)"></i>
<i class="dv" style="top:255px"></i>
<i class="dv" style="top:288px"></i>
<i class="dv" style="top:320px;transform:translateY(0.3px)"></i>
<i class="cv" style="left:154px"></i>
<i class="cv" style="left:225px"></i>
<i class="cv" style="left:279px"></i>
<i class="cv" style="left:348px"></i>
<i class="cv" style="left:407px"></i>
<i class="cv" style="left:687px"></i>
<i class="cv" style="left:847px"></i>
<i class="cv" style="left:955px"></i>
<i class="cv" style="left:996px"></i>
<i class="cv" style="left:1069px"></i>
<i class="cv" style="left:1145px"></i>
</div>
</section>
<section class="card" style="left:16px;top:617px;width:1330px;height:300px;--dx:-0.50px;--sx:1.00038;">
<h2 class="t" style="left:9.04px;top:12.30px;font-size:12.7px;transform:scaleX(1.0810);font-weight:700;color:#1f2329;">Alerts by Module</h2>
<div style="position:absolute;left:184px;top:39px;width:200px;height:10px;overflow:hidden">
<span style="position:absolute;left:8.7px;top:4.5px;width:14.6px;height:14.6px;border-radius:50%;background:#3f6fe8"></span>
<span class="t" style="left:26.19px;top:5.90px;font-size:11.8px;transform:scaleX(0.9373);color:#2a2d33;">Internet Gateway Device v1.0</span>
</div>
<div class="tbl" style="left:565px;top:37px;width:756px;height:200px;background:#f3f4f4">
<span class="t" style="left:7.26px;top:8.90px;font-size:11.8px;transform:scaleX(1.0775);color:#6d7480;">Device Type</span>
<span class="t" style="left:712.34px;top:8.90px;font-size:11.8px;transform:scaleX(1.1057);color:#6d7480;">Count</span>
</div>
</section>
</main>
<div class="vs"><div class="thumb" style="left:1.3px;top:-20px;width:6.3px;height:577.6px"></div><svg style="left:1.2px;top:666.6px" width="6.6" height="4.6" viewBox="0 0 6.6 4.6"><path d="M0.6 0.5H6L3.3 4.2Z" fill="#a9a9a9" stroke="#a9a9a9" stroke-width="0.8" stroke-linejoin="round"/></svg></div>
<div class="hs"><div class="thumb" style="left:12px;top:2px;width:1332px;height:6px"></div><svg style="left:2.8px;top:1.8px" width="4.6" height="6.4" viewBox="0 0 4.6 6.4"><path d="M4.1 0.6V5.8L0.5 3.2Z" fill="#a9a9a9" stroke="#a9a9a9" stroke-width="0.8" stroke-linejoin="round"/></svg><svg style="left:1349px;top:1.8px" width="4.6" height="6.4" viewBox="0 0 4.6 6.4"><path d="M0.5 0.6V5.8L4.1 3.2Z" fill="#a9a9a9" stroke="#a9a9a9" stroke-width="0.8" stroke-linejoin="round"/></svg></div>
</body></html>
